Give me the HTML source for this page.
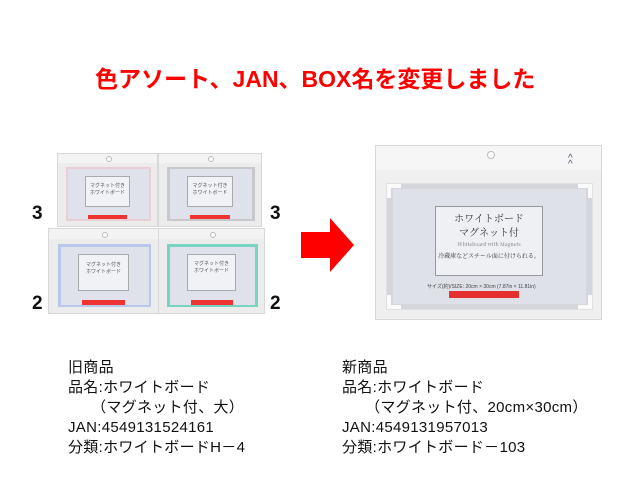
<!DOCTYPE html>
<html><head><meta charset="utf-8"><style>
body{margin:0;width:640px;height:480px;background:#fff;position:relative;overflow:hidden;font-family:"Liberation Sans","Noto Sans CJK JP",sans-serif}
.a{position:absolute}
.title{left:95px;top:60px;font-size:23px;font-weight:bold;color:#f00;white-space:nowrap}
.pack{position:absolute;background:#ececec;border:1px solid #d8d8d8}
.pack .hd{position:absolute;left:0;right:0;top:0;height:12%;background:#f3f3f3}
.pack .hole{position:absolute;left:50%;top:3%;width:4px;height:4px;margin-left:-2px;border-radius:50%;background:#fff;border:1px solid #bbb}
.pack .fr{position:absolute;left:8%;right:6%;top:18%;bottom:7%}
.pack .bd{position:absolute;left:3%;right:3%;top:4%;bottom:4%;background:#dfe2ea}
.pack .lb{position:absolute;left:27%;right:27%;top:14%;bottom:26%;background:#f1f2f5;border:1px solid #aaa;font-size:5px;color:#555;text-align:center;line-height:7px;padding-top:6%;box-sizing:border-box}
.pack .rs{position:absolute;left:30%;right:30%;bottom:10%;height:6%;background:#e33}
.num{font-size:19px;font-weight:bold;color:#111}
.txt{font-size:15px;line-height:20px;color:#111;white-space:pre;letter-spacing:0.3px}
</style></head><body>
<div class="a title">色アソート、JAN、BOX名を変更しました</div>

<div class="pack" style="left:57px;top:153px;width:99px;height:72px"><div class="hd"></div><div class="hole"></div><div class="fr" style="background:#e9cfd3"><div class="bd"></div></div><div class="lb" style="top:30%">マグネット付き<br>ホワイトボード</div><div class="rs"></div></div>
<div class="pack" style="left:158px;top:153px;width:102px;height:72px"><div class="hd"></div><div class="hole"></div><div class="fr" style="background:#c8c8ca"><div class="bd"></div></div><div class="lb" style="top:30%">マグネット付き<br>ホワイトボード</div><div class="rs"></div></div>
<div class="pack" style="left:48px;top:228px;width:109px;height:84px"><div class="hd"></div><div class="hole"></div><div class="fr" style="background:#b9c8ea"><div class="bd"></div></div><div class="lb" style="top:30%">マグネット付き<br>ホワイトボード</div><div class="rs"></div></div>
<div class="pack" style="left:158px;top:228px;width:105px;height:84px"><div class="hd"></div><div class="hole"></div><div class="fr" style="background:#79d3c3"><div class="bd"></div></div><div class="lb" style="top:30%">マグネット付き<br>ホワイトボード</div><div class="rs"></div></div>

<div class="a num" style="left:32px;top:203px">3</div>
<div class="a num" style="left:270px;top:203px">3</div>
<div class="a num" style="left:32px;top:293px">2</div>
<div class="a num" style="left:270px;top:293px">2</div>

<svg class="a" style="left:0;top:0" width="640" height="480"><polygon points="301,232 330,232 330,218 354,245 330,272 330,258 301,258" fill="#f00"/></svg>

<div class="pack" style="left:375px;top:145px;width:225px;height:173px;background:#efefef">
 <div class="hd" style="height:14%;background:#f6f6f6"></div><div class="hole" style="width:6px;height:6px"></div>
 <div class="a" style="left:192px;top:10px;width:14px;height:12px;color:#4a5a7a;font-size:10px;line-height:6px">^<br>^</div>
 <div class="a" style="left:10px;top:37px;width:205px;height:125px;background:#d4d6dc;border:1px solid #e0e0e0">
  <div class="a" style="left:6px;top:5px;right:6px;bottom:5px;background:#dfe1e8"></div>
  <div class="a" style="left:48px;top:22px;width:108px;height:70px;background:#eef0f4;border:1px solid #999;text-align:center;font-family:'Noto Serif CJK SC',serif;font-size:10px;line-height:14px;color:#333;padding-top:4px;box-sizing:border-box">ホワイトボード<br>マグネット付<div style="font-size:5px;line-height:12px;color:#777">Whiteboard with Magnets</div><div style="font-size:6px;line-height:10px">冷蔵庫などスチール面に付けられる。</div></div>
  <div class="a" style="left:40px;top:99px;font-size:5px;color:#444;white-space:nowrap">サイズ(約)/SIZE: 20cm × 30cm (7.87in × 11.81in)</div>
  <div class="a" style="left:62px;top:107px;width:70px;height:7px;background:#e53030"></div>
  <div class="a" style="left:0;top:0;width:14px;height:14px;border-left:4px solid #fafafa;border-top:4px solid #fafafa;box-sizing:border-box"></div>
  <div class="a" style="right:0;top:0;width:14px;height:14px;border-right:4px solid #fafafa;border-top:4px solid #fafafa;box-sizing:border-box"></div>
  <div class="a" style="left:0;bottom:0;width:14px;height:14px;border-left:4px solid #fafafa;border-bottom:4px solid #fafafa;box-sizing:border-box"></div>
  <div class="a" style="right:0;bottom:0;width:14px;height:14px;border-right:4px solid #fafafa;border-bottom:4px solid #fafafa;box-sizing:border-box"></div>
 </div>
</div>

<div class="a txt" style="left:68px;top:358px">旧商品
品名:ホワイトボード
　　（マグネット付、大）
JAN:4549131524161
分類:ホワイトボードH－4</div>
<div class="a txt" style="left:342px;top:358px">新商品
品名:ホワイトボード
　　（マグネット付、20cm×30cm）
JAN:4549131957013
分類:ホワイトボード－103</div>
</body></html>
